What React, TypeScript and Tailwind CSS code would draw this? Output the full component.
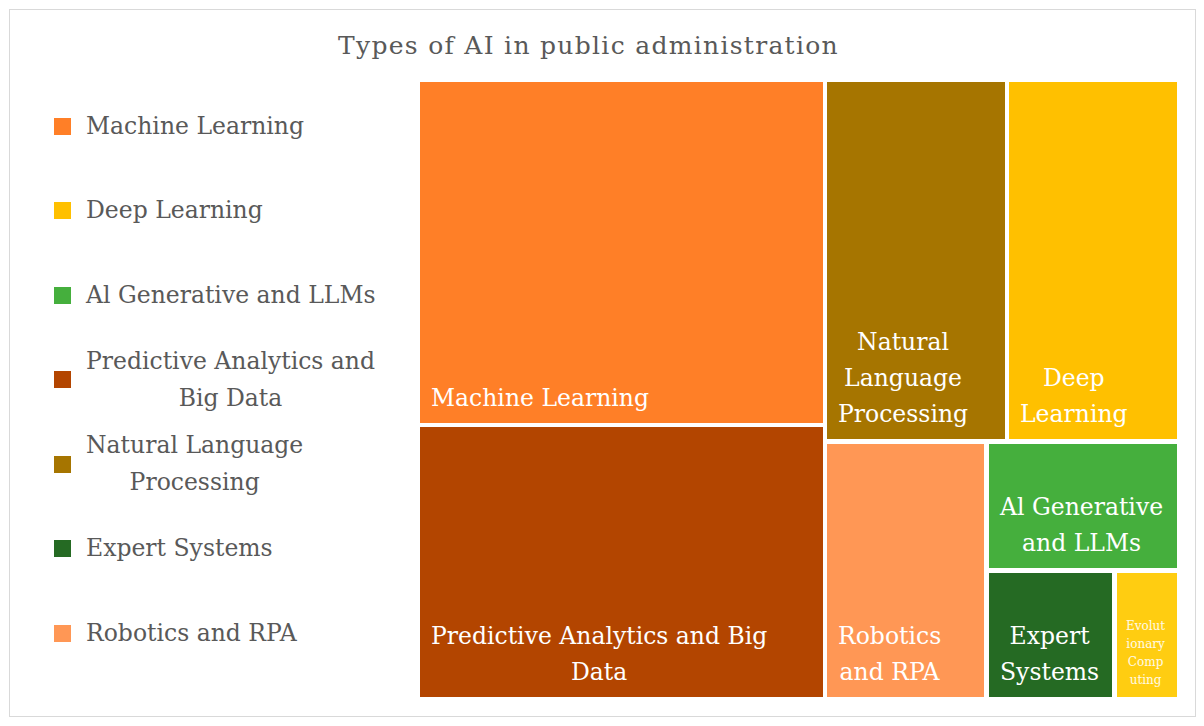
import React from "react";

interface Item {
  name: string[];
  color: string;
}

const legend: Item[] = [
  { name: ["Machine Learning"], color: "bg-[#ff7f27]" },
  { name: ["Deep Learning"], color: "bg-[#ffc000]" },
  { name: ["Al Generative and LLMs"], color: "bg-[#45af3d]" },
  { name: ["Predictive Analytics and", "Big Data"], color: "bg-[#b34500]" },
  { name: ["Natural Language", "Processing"], color: "bg-[#a67500]" },
  { name: ["Expert Systems"], color: "bg-[#256a23]" },
  { name: ["Robotics and RPA"], color: "bg-[#ff9755]" },
];

const Tile = ({
  lines,
  className,
  small,
}: {
  lines: string[];
  className: string;
  small?: boolean;
}) => (
  <div
    className={`flex flex-col justify-end items-start ${
      small ? "pl-[9px] pb-[8px]" : "pl-[11px] pb-[7px]"
    } ${className}`}
  >
    <div
      className={
        small
          ? "text-center whitespace-nowrap text-[12px] leading-[18px] text-white/90"
          : "text-center whitespace-nowrap text-[23.5px] leading-[36px] text-white"
      }
    >
      {lines.map((l) => (
        <div key={l}>{l}</div>
      ))}
    </div>
  </div>
);

const App = () => {
  return (
    <div className="w-[1204px] h-[726px] bg-white pt-[9px] pl-[9px] font-['DejaVu_Serif',serif]">
      <div className="w-[1187px] h-[708px] border border-[#d9d9d9]">
        <div className="mt-[21px] h-[30px] flex justify-center pr-[28px]">
          <h1 className="text-[25px] leading-[30px] tracking-[1.3px] text-[#595959] whitespace-nowrap">
            Types of AI in public administration
          </h1>
        </div>

        <div className="flex pt-[21px]">
          {/* legend */}
          <div className="w-[410px] shrink-0 flex flex-col pl-[44px] pt-[2px]">
            {legend.map((item) => (
              <div key={item.name[0]} className="h-[84.5px] flex items-center gap-[15px]">
                <div className={`w-[17px] h-[17px] shrink-0 ${item.color}`} />
                <div className="text-center text-[23.5px] leading-[37px] text-[#595959] whitespace-nowrap">
                  {item.name.map((l) => (
                    <div key={l}>{l}</div>
                  ))}
                </div>
              </div>
            ))}
          </div>

          {/* treemap */}
          <div className="w-[757px] h-[615px] flex gap-[4px]">
            <div className="w-[403px] flex flex-col gap-[4px]">
              <Tile lines={["Machine Learning"]} className="h-[341px] bg-[#ff7f27]" />
              <Tile
                lines={["Predictive Analytics and Big", "Data"]}
                className="flex-1 bg-[#b34500]"
              />
            </div>
            <div className="w-[350px] flex flex-col gap-[5px]">
              <div className="h-[357px] flex gap-[4px]">
                <Tile
                  lines={["Natural", "Language", "Processing"]}
                  className="w-[178px] bg-[#a67500]"
                />
                <Tile lines={["Deep", "Learning"]} className="flex-1 bg-[#ffc000]" />
              </div>
              <div className="flex-1 flex gap-[5px]">
                <Tile lines={["Robotics", "and RPA"]} className="w-[157px] bg-[#ff9755]" />
                <div className="flex-1 flex flex-col gap-[5px]">
                  <Tile
                    lines={["Al Generative", "and LLMs"]}
                    className="h-[124px] bg-[#45af3d]"
                  />
                  <div className="flex-1 flex gap-[5px]">
                    <Tile lines={["Expert", "Systems"]} className="w-[123px] bg-[#256a23]" />
                    <Tile
                      small
                      lines={["Evolut", "ionary", "Comp", "uting"]}
                      className="flex-1 bg-[#ffcd11]"
                    />
                  </div>
                </div>
              </div>
            </div>
          </div>
        </div>
      </div>
    </div>
  );
};

export default App;
